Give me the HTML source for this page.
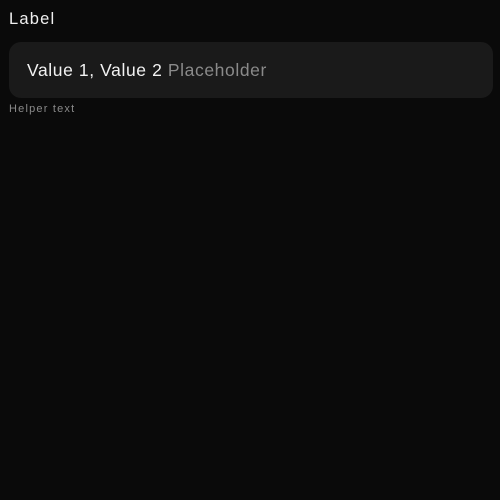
<!DOCTYPE html>
<html><head><style>
html,body{margin:0;padding:0;width:500px;height:500px;background:#0a0a0a;overflow:hidden;font-family:"Liberation Sans",sans-serif}
.label{position:absolute;left:9px;top:10px;font-size:16.5px;letter-spacing:1.2px;color:#f0f0f0}
.box{position:absolute;left:9px;top:42px;width:484px;height:56px;background:#1a1a1a;border-radius:12px}
.val{position:absolute;left:18px;top:18px;font-size:17.5px;letter-spacing:0.6px;color:#f2f2f2;white-space:nowrap}
.ph{color:#8a8a8a}
.help{position:absolute;left:9px;top:103px;font-size:11px;letter-spacing:1.2px;color:#8a8a8a}
</style></head><body>
<div class="label">Label</div>
<div class="box"><div class="val">Value 1, Value 2 <span class="ph">Placeholder</span></div></div>
<div class="help">Helper text</div>
</body></html>
